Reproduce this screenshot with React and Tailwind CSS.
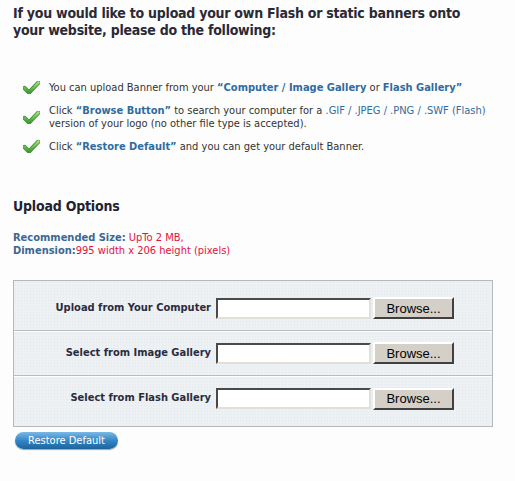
import React from 'react';

const font = "font-['DejaVu_Sans_Condensed','DejaVu_Sans',sans-serif]";

const Check = () => (
  <svg width="17" height="13" viewBox="0 0 17 13" className="shrink-0">
    <defs>
      <linearGradient id="chk" x1="0" y1="0" x2="0" y2="1">
        <stop offset="0" stopColor="#9be07a" />
        <stop offset="1" stopColor="#3f9a32" />
      </linearGradient>
    </defs>
    <path d="M1.5 7 L6 11.5 L15.5 1.5" fill="none" stroke="#3d8a2e" strokeWidth="4.2" strokeLinecap="round" strokeLinejoin="round" />
    <path d="M1.5 7 L6 11.5 L15.5 1.5" fill="none" stroke="url(#chk)" strokeWidth="2.6" strokeLinecap="round" strokeLinejoin="round" />
  </svg>
);

const Blue = ({ children }) => <span className="font-bold text-[#2f6c9f]">{children}</span>;

const Row = ({ label, last }) => (
  <div className={`flex items-center h-[45px] ${last ? '' : 'border-b border-[#b9bdc0] shadow-[0_1px_0_#ffffff]'}`}>
    <div className="w-[202px] pr-[5px] text-right text-[11px] font-bold text-[#2b2b40]">{label}</div>
    <input
      type="text"
      className="w-[155px] h-[21px] bg-white border-2 border-t-[#4a4a4a] border-l-[#4a4a4a] border-b-[#e2dfd8] border-r-[#e2dfd8] outline-none"
    />
    <button className="ml-[2px] w-[81px] h-[22px] bg-[#d4d0c8] border-2 border-t-white border-l-white border-b-[#404040] border-r-[#404040] text-[13px] text-black font-['Liberation_Sans',sans-serif] leading-none">
      Browse...
    </button>
  </div>
);

export default function App() {
  return (
    <div className={`w-[515px] h-[481px] bg-[#fdfdfd] text-[#333] ${font}`}>
      <h1 className="pl-[13px] pt-[5px] text-[14px] leading-[17px] tracking-[-0.25px] font-bold text-[#2a2a36]">
        If you would like to upload your own Flash or static banners onto
        <br />
        your website, please do the following:
      </h1>

      <ul className="mt-[42px] pl-[23px] text-[11px] leading-[13px] flex flex-col gap-[10px]">
        <li className="flex items-center gap-[9px]">
          <Check />
          <span>
            You can upload Banner from your <Blue>“Computer / Image Gallery</Blue> or <Blue>Flash Gallery”</Blue>
          </span>
        </li>
        <li className="flex items-center gap-[9px]">
          <Check />
          <span>
            Click <Blue>“Browse Button”</Blue> to search your computer for a{' '}
            <span className="text-[#2f6c9f]">.GIF / .JPEG / .PNG / .SWF (Flash)</span>
            <br />
            version of your logo (no other file type is accepted).
          </span>
        </li>
        <li className="flex items-center gap-[9px]">
          <Check />
          <span>
            Click <Blue>“Restore Default”</Blue> and you can get your default Banner.
          </span>
        </li>
      </ul>

      <h2 className="mt-[45px] pl-[13px] text-[14px] leading-[17px] tracking-[-0.2px] font-bold text-[#222230]">Upload Options</h2>

      <div className="mt-[16px] pl-[13px] text-[11px] leading-[13px]">
        <div>
          <span className="font-bold text-[#3a6892]">Recommended Size:</span>
          <span className="text-[#e4123e]"> UpTo 2 MB,</span>
        </div>
        <div>
          <span className="font-bold text-[#3a6892]">Dimension:</span>
          <span className="text-[#e4123e]">995 width x 206 height (pixels)</span>
        </div>
      </div>

      <div className="ml-[13px] mt-[23px] w-[480px] border border-[#b5b9bc] bg-[#edf1f3] bg-[radial-gradient(#e2e7ea_0.6px,transparent_0.7px)] bg-[length:3px_3px] py-[5px]">
        <Row label="Upload from Your Computer" />
        <Row label="Select from Image Gallery" />
        <Row label="Select from Flash Gallery" last />
      </div>

      <button className="ml-[15px] mt-[5px] w-[103px] h-[17px] rounded-full bg-gradient-to-b from-[#7ab8e6] via-[#3586c4] to-[#1d649e] shadow-[0_1px_1px_#9aa4ac] text-white text-[11px] leading-none">
        Restore Default
      </button>
    </div>
  );
}
